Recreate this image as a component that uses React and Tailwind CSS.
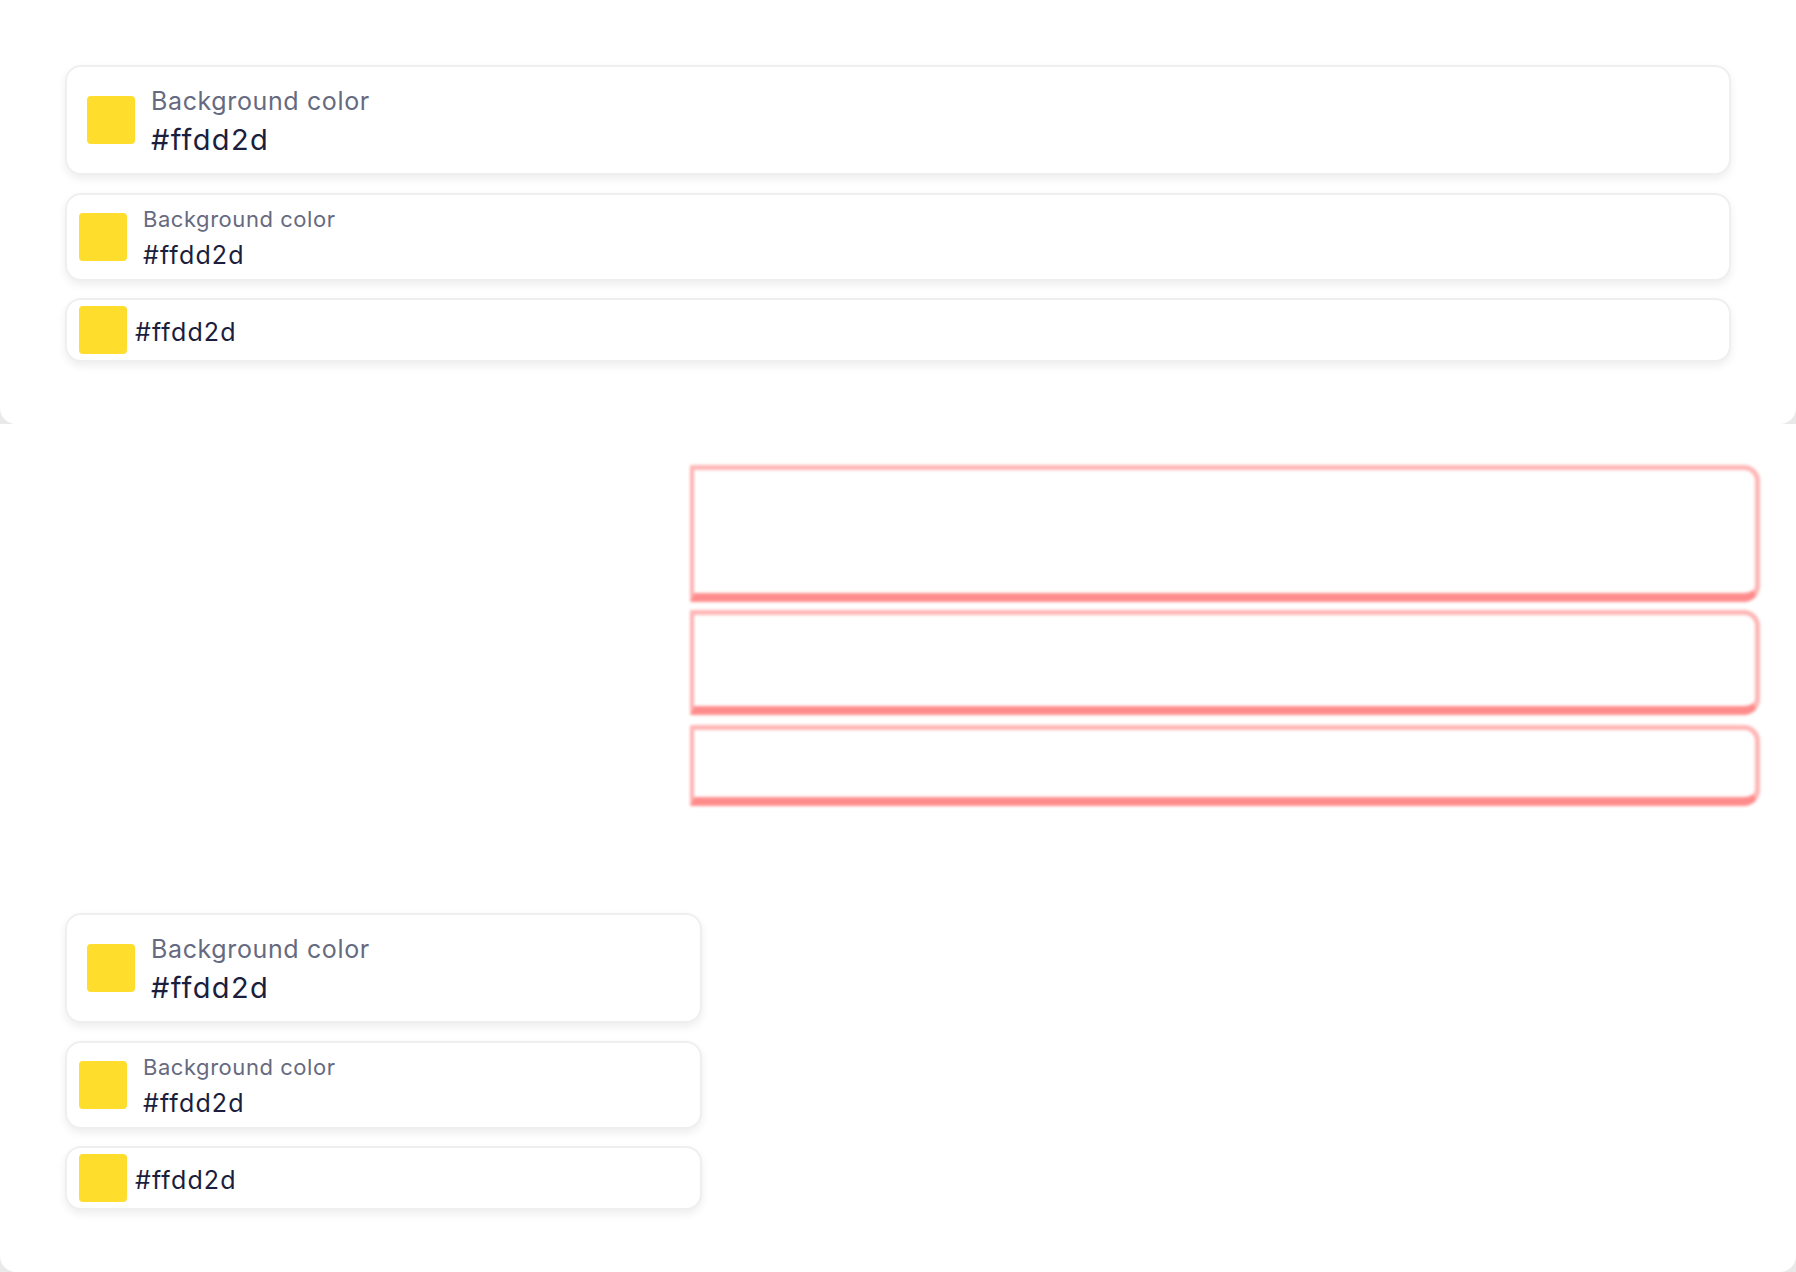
import React from 'react';

const SWATCH = '#ffdd2d';

function Swatch() {
  return <div className="w-12 h-12 shrink-0 rounded-[4px] bg-[#ffdd2d]" />;
}

function LargeCard() {
  return (
    <div className="flex items-center gap-4 px-5 py-4 bg-white border-2 border-[#efefef] rounded-2xl shadow-[0_4px_8px_rgba(0,0,0,0.07)]">
      <Swatch />
      <div className="flex flex-col pt-[2px]">
        <span className="text-[25px] leading-[32px] tracking-[0.025em] text-[#666a80]">Background color</span>
        <span className="text-[29px] leading-[34px] mt-[6px] tracking-[0.045em] text-[#1b1e3d]">{SWATCH}</span>
      </div>
    </div>
  );
}

function MediumCard() {
  return (
    <div className="flex items-center gap-4 px-3 py-[9px] bg-white border-2 border-[#efefef] rounded-2xl shadow-[0_4px_8px_rgba(0,0,0,0.07)]">
      <Swatch />
      <div className="flex flex-col pt-[1px]">
        <span className="text-[22px] leading-[28px] tracking-[0.025em] text-[#666a80]">Background color</span>
        <span className="text-[25px] leading-[30px] mt-[7px] tracking-[0.045em] text-[#1b1e3d]">{SWATCH}</span>
      </div>
    </div>
  );
}

function SmallCard() {
  return (
    <div className="flex items-center gap-2 px-3 py-[6px] bg-white border-2 border-[#efefef] rounded-2xl shadow-[0_4px_8px_rgba(0,0,0,0.07)]">
      <Swatch />
      <span className="pt-1 text-[25px] leading-[32px] tracking-[0.045em] text-[#1b1e3d]">{SWATCH}</span>
    </div>
  );
}

function CardStack() {
  return (
    <div className="flex flex-col gap-[18px]">
      <LargeCard />
      <MediumCard />
      <div className="-mt-[1px]">
        <SmallCard />
      </div>
    </div>
  );
}

export default function App() {
  return (
    <div className="min-h-screen bg-[#e9e9e9] font-['Inter',sans-serif]">
      {/* full width stack */}
      <section className="h-[424px] p-[65px] bg-white rounded-b-2xl">
        <CardStack />
      </section>

      {/* outline overlay of the stack */}
      <section className="h-[424px] bg-white pt-[41px] pl-[690px] pr-[36px]">
        <div className="flex flex-col gap-[7px]">
          <div className="h-[137px] border-[5px] border-[#ffa3a3]/80 border-l-[4px] border-l-[#ffb0b0] border-b-[9px] border-b-[#ff7070]/80 rounded-r-2xl blur-[1.6px]" />
          <div className="h-[105px] mt-[1px] border-[5px] border-[#ffa3a3]/80 border-l-[4px] border-l-[#ffb0b0] border-b-[9px] border-b-[#ff7070]/80 rounded-r-2xl blur-[1.6px]" />
          <div className="h-[81px] mt-[3px] border-[5px] border-[#ffa3a3]/80 border-l-[4px] border-l-[#ffb0b0] border-b-[9px] border-b-[#ff7070]/80 rounded-r-2xl blur-[1.6px]" />
        </div>
      </section>

      {/* narrow stack */}
      <section className="h-[424px] p-[65px] bg-white rounded-b-2xl">
        <div className="w-[637px]">
          <CardStack />
        </div>
      </section>
    </div>
  );
}
